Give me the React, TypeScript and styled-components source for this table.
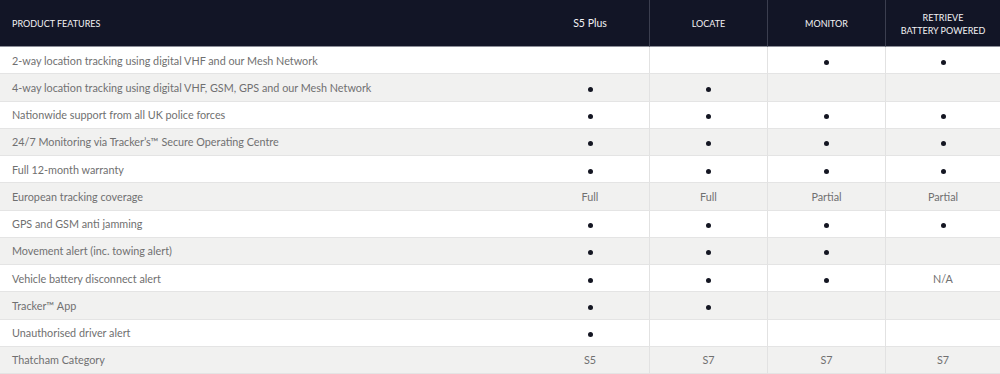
import styled, { createGlobalStyle } from 'styled-components';

const GlobalStyle = createGlobalStyle`
	html, body {
		margin: 0;
		padding: 0;
		background: #ffffff;
	}
`;

const Table = styled.div`
	width: 1000px;
	height: 374px;
	display: grid;
	grid-template-columns: 531px 118px 118px 118px 1fr;
	grid-template-rows: 47px repeat(12, 1fr);
	font-family: Lato, 'Open Sans', sans-serif;
	overflow: hidden;
`;

const HeadCell = styled.div<{ $first?: boolean; $noLine?: boolean }>`
	background: #121526;
	color: #f2f2f4;
	font-size: 9px;
	line-height: 13px;
	display: flex;
	align-items: center;
	justify-content: ${(p) => (p.$first ? 'flex-start' : 'center')};
	text-align: center;
	padding-left: ${(p) => (p.$first ? '12px' : '0')};
	padding-top: 1px;
	border-left: ${(p) => (p.$first || p.$noLine ? 'none' : '1px solid #3b3e4f')};
	border-bottom: 1px solid #8c8e98;
`;

const HeadLabel = styled.span<{ $large?: boolean }>`
	white-space: pre-line;
	font-size: ${(p) => (p.$large ? '10.5px' : 'inherit')};
`;

const Cell = styled.div<{ $shade: boolean; $first?: boolean; $noLine?: boolean }>`
	background: ${(p) => (p.$shade ? '#f1f1f0' : '#ffffff')};
	color: #707070;
	font-size: 10.8px;
	display: flex;
	align-items: center;
	justify-content: ${(p) => (p.$first ? 'flex-start' : 'center')};
	padding-left: ${(p) => (p.$first ? '12px' : '0')};
	border-left: ${(p) => (p.$first || p.$noLine ? 'none' : '1px solid #e2e2e2')};
	border-bottom: 1px solid #e4e4e4;
	white-space: nowrap;
`;

const Dot = styled.span`
	width: 5px;
	height: 5px;
	border-radius: 50%;
	background: #141622;
	margin-top: 4px;
`;

type Value = boolean | string;

const columns = ['S5 Plus', 'LOCATE', 'MONITOR', 'RETRIEVE\nBATTERY POWERED'];

const rows: { feature: string; values: Value[] }[] = [
	{ feature: '2-way location tracking using digital VHF and our Mesh Network', values: [false, false, true, true] },
	{ feature: '4-way location tracking using digital VHF, GSM, GPS and our Mesh Network', values: [true, true, false, false] },
	{ feature: 'Nationwide support from all UK police forces', values: [true, true, true, true] },
	{ feature: '24/7 Monitoring via Tracker’s™ Secure Operating Centre', values: [true, true, true, true] },
	{ feature: 'Full 12-month warranty', values: [true, true, true, true] },
	{ feature: 'European tracking coverage', values: ['Full', 'Full', 'Partial', 'Partial'] },
	{ feature: 'GPS and GSM anti jamming', values: [true, true, true, true] },
	{ feature: 'Movement alert (inc. towing alert)', values: [true, true, true, false] },
	{ feature: 'Vehicle battery disconnect alert', values: [true, true, true, 'N/A'] },
	{ feature: 'Tracker™ App', values: [true, true, false, false] },
	{ feature: 'Unauthorised driver alert', values: [true, false, false, false] },
	{ feature: 'Thatcham Category', values: ['S5', 'S7', 'S7', 'S7'] },
];

export default function App() {
	return (
		<>
			<GlobalStyle />
			<Table>
				<HeadCell $first>PRODUCT FEATURES</HeadCell>
				{columns.map((c, j) => (
					<HeadCell key={c} $noLine={j === 0}>
						<HeadLabel $large={j === 0}>{c}</HeadLabel>
					</HeadCell>
				))}
				{rows.map((row, i) => {
					const shade = i % 2 === 1;
					return [
						<Cell key={`${i}-f`} $shade={shade} $first>
							{row.feature}
						</Cell>,
						...row.values.map((v, j) => (
							<Cell key={`${i}-${j}`} $shade={shade} $noLine={j === 0}>
								{v === true ? <Dot /> : v || null}
							</Cell>
						)),
					];
				})}
			</Table>
		</>
	);
}
